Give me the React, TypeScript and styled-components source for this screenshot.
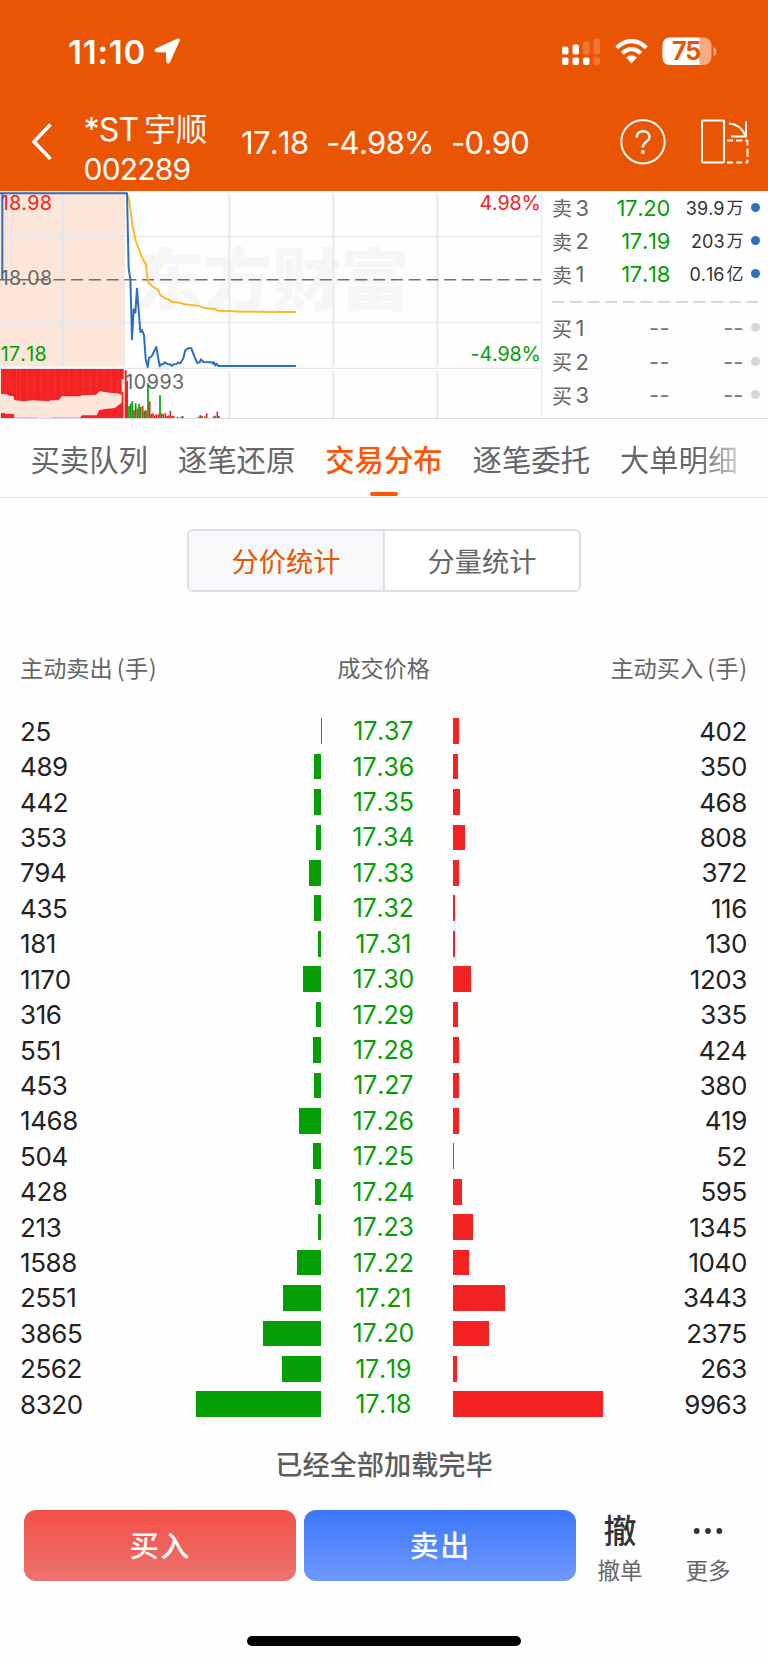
import React from 'react';
import styled, { createGlobalStyle } from 'styled-components';

const GREEN = '#059f05';
const RED = '#f42222';
const BLUE = '#2d70c2';

const GlobalStyle = createGlobalStyle`
  * { box-sizing: border-box; }
  body {
    margin: 0;
    background: #fff;
    font-family: Inter, 'Noto Sans CJK SC', sans-serif;
    font-kerning: none;
    color: #222;
  }
`;

const Screen = styled.main`
  width: 768px;
  height: 1663px;
  display: flex;
  flex-direction: column;
  background: #fefefe;
  overflow: hidden;
  white-space: nowrap;
`;

const Header = styled.header`
  height: 190.5px;
  flex: none;
  background: #ea5504;
  color: #fff;
`;

const StatusBar = styled.div`
  height: 102px;
  display: flex;
  align-items: center;
  padding: 1px 51.5px 0 68px;
`;

const Clock = styled.span`
  width: 86px;
  font-size: 33px;
  font-weight: 600;
  letter-spacing: 0.8px;
`;

const StatusIcons = styled.div`
  margin-left: auto;
  display: flex;
  align-items: center;
`;

const TitleBar = styled.div`
  display: flex;
  height: 88px;
  padding-left: 31px;
`;

const BackIcon = styled.svg`
  margin-top: 21px;
  flex: none;
`;

const StockName = styled.div`
  width: 157px;
  padding: 8px 0 0 30.5px;
  display: flex;
  flex-direction: column;
`;

const Name = styled.span`
  font-size: 32px;
  line-height: 40px;
  letter-spacing: -0.8px;
`;

const Cjk = styled.span`
  font-size: 31.5px;
  letter-spacing: -0.2px;
  margin-left: 6px;
`;

const Code = styled.span`
  font-size: 30px;
  line-height: 39px;
  letter-spacing: -0.8px;
`;

const Quote = styled.div`
  display: flex;
  width: 400px;
  height: 80px;
  padding-left: 31px;
  align-items: center;
  font-size: 31px;
  letter-spacing: -0.7px;
`;

const QuoteValue = styled.span<{ $width: number }>`
  width: ${(p) => p.$width}px;
`;

const TitleIcons = styled.div`
  display: flex;
  height: 80px;
  align-items: center;
  gap: 35px;
  margin-left: 10px;
`;

const Market = styled.section`
  height: 228.5px;
  flex: none;
  display: flex;
  border-bottom: 1.5px solid #d9dbe2;
`;

const Chart = styled.svg`
  width: 541px;
  height: 227px;
  flex: none;
`;

const OrderBook = styled.div`
  flex: 1;
  border-left: 1px solid #e6e8ee;
  padding: 0.5px 8px 0 10px;
`;

const OrderRow = styled.div`
  height: 33.4px;
  display: flex;
  align-items: center;
  color: #666;
`;

const OrderLabel = styled.span`
  width: 48px;
  font-size: 20px;
  display: flex;
  align-items: center;
  gap: 3.5px;
`;

const Level = styled.span`
  font-size: 22px;
`;

const OrderPrice = styled.span<{ $empty: boolean }>`
  width: 70px;
  text-align: right;
  font-size: 22px;
  letter-spacing: ${(p) => (p.$empty ? 0.4 : -0.3)}px;
  color: ${(p) => (p.$empty ? '#777' : GREEN)};
`;

const OrderVolume = styled.span<{ $empty: boolean }>`
  width: 73.5px;
  display: flex;
  align-items: center;
  justify-content: flex-end;
  gap: 2px;
  padding-top: ${(p) => (p.$empty ? 0 : 1)}px;
  font-size: ${(p) => (p.$empty ? 22 : 18)}px;
  color: ${(p) => (p.$empty ? '#777' : '#333')};
`;

const VolumeUnit = styled.span`
  font-size: 17px;
  line-height: 22px;
  padding-bottom: 1px;
`;

const Dot = styled.i<{ $empty: boolean }>`
  width: 9px;
  height: 9px;
  border-radius: 50%;
  margin: 0 0 1px 7.5px;
  background: ${(p) => (p.$empty ? '#d4d7dd' : BLUE)};
`;

const OrderDivider = styled.svg`
  display: block;
  margin: 10px 0 8.5px;
`;

const Tabs = styled.nav`
  height: 78.5px;
  flex: none;
  display: flex;
  gap: 30px;
  padding-left: 30.5px;
  border-bottom: 1.5px solid #dcdfe5;
`;

const Tab = styled.div<{ $active?: boolean; $faded?: boolean }>`
  width: 117.4px;
  flex: none;
  display: flex;
  flex-direction: column;
  align-items: center;
  font-size: 29.4px;
  line-height: 44px;
  padding-top: 19.5px;
  font-weight: ${(p) => (p.$active ? 500 : 400)};
  color: ${(p) => (p.$active ? '#ff5500' : '#666')};
  ${(p) => p.$faded && 'mask-image: linear-gradient(90deg, #000 65%, rgba(0,0,0,.35) 100%);'}
`;

const Indicator = styled.i`
  width: 28px;
  height: 4px;
  margin-top: 9px;
  border-radius: 2px;
  background: #ff5500;
`;

const Segmented = styled.div`
  width: 394px;
  height: 63px;
  flex: none;
  margin: 31.5px auto 0 187px;
  display: flex;
  border: 2px solid #dcdfe5;
  border-radius: 6px;
  overflow: hidden;
`;

const Segment = styled.div<{ $active?: boolean }>`
  flex: 1;
  display: flex;
  align-items: center;
  justify-content: center;
  padding-bottom: 2px;
  font-size: 27.2px;
  color: ${(p) => (p.$active ? '#ea5504' : '#666')};
  background: ${(p) => (p.$active ? '#f7f8fa' : '#fff')};
  & + & { border-left: 2px solid #dcdfe5; }
`;

const Columns = styled.div`
  display: grid;
  grid-template-columns: 1fr 93px 1fr;
  height: 34px;
  flex: none;
  margin-top: 58px;
  padding: 0 20.5px 0 20px;
  align-items: center;
  font-size: 23.2px;
  color: #666;
  & > :last-child { text-align: right; }
`;

const Unit = styled.span`
  margin-left: 4px;
  letter-spacing: 0.5px;
  font-family: 'Noto Sans CJK SC', sans-serif;
`;

const Table = styled.div`
  margin-top: 29.5px;
  flex: none;
`;

const TableRow = styled.div`
  height: 35.43px;
  display: grid;
  grid-template-columns: 161px 140px 132px 160px 134px;
  padding-left: 20px;
  align-items: center;
  font-size: 26px;
  letter-spacing: -0.4px;
`;

const Price = styled.span`
  text-align: center;
  padding-right: 7.5px;
  font-size: 25px;
  letter-spacing: -0.2px;
  color: ${GREEN};
`;

const Bar = styled.i<{ $side: 'sell' | 'buy' }>`
  height: 25.7px;
  justify-self: ${(p) => (p.$side === 'sell' ? 'end' : 'start')};
  background: ${(p) => (p.$side === 'sell' ? '#049f04' : RED)};
`;

const Amount = styled.span<{ $right?: boolean }>`
  text-align: ${(p) => (p.$right ? 'right' : 'left')};
`;

const Loaded = styled.p`
  margin: 19.500px 0 0;
  height: 50px;
  flex: none;
  line-height: 50px;
  text-align: center;
  font-size: 27.2px;
  font-weight: 500;
  color: #5c5c5c;
`;

const Actions = styled.footer`
  display: flex;
  flex: none;
  margin-top: 19px;
  padding-left: 24px;
`;

const TradeButtons = styled.div`
  display: flex;
  gap: 8px;
`;

const TradeButton = styled.button<{ $from: string; $to: string }>`
  width: 272px;
  height: 71px;
  border: 0;
  border-radius: 12px;
  padding: 0 0 3px 0.5px;
  background: linear-gradient(${(p) => p.$from}, ${(p) => p.$to});
  color: #fff;
  font-family: inherit;
  font-size: 29px;
  font-weight: 500;
  letter-spacing: 1.5px;
`;

const Action = styled.div`
  width: 88px;
  display: flex;
  flex-direction: column;
  align-items: center;
  font-size: 22.5px;
  line-height: 30px;
  color: #666;
`;

const ActionGlyph = styled.span`
  height: 41px;
  display: flex;
  align-items: center;
  font-size: 33px;
  font-weight: 500;
  color: #333;
  margin-bottom: 4.5px;
`;

const HomeIndicator = styled.div`
  width: 274px;
  height: 10px;
  flex: none;
  border-radius: 5px;
  margin: 50.5px auto 0 247px;
  background: #000;
`;

const trades: [number, string, number][] = [
  [25, '17.37', 402], [489, '17.36', 350], [442, '17.35', 468], [353, '17.34', 808],
  [794, '17.33', 372], [435, '17.32', 116], [181, '17.31', 130], [1170, '17.30', 1203],
  [316, '17.29', 335], [551, '17.28', 424], [453, '17.27', 380], [1468, '17.26', 419],
  [504, '17.25', 52], [428, '17.24', 595], [213, '17.23', 1345], [1588, '17.22', 1040],
  [2551, '17.21', 3443], [3865, '17.20', 2375], [2562, '17.19', 263], [8320, '17.18', 9963],
];

const sells = [['3', '17.20', '39.9', '万'], ['2', '17.19', '203', '万'], ['1', '17.18', '0.16', '亿']];
const barWidth = (v: number) => (v / 9963) * 150;

/* x, top and colour of each minute's volume bar */
const volumes: [number, number, 'g' | 'r'][] = [
  [386, 662, 'g'], [391, 655, 'g'], [396, 648, 'g'], [401, 675, 'r'], [406, 654, 'g'], [411, 670, 'r'],
  [416, 656, 'g'], [421, 665, 'g'], [427, 662, 'r'], [432, 676, 'g'], [437, 675, 'r'], [443, 594, 'g'],
  [448, 648, 'r'], [453, 686, 'r'], [458, 684, 'r'], [463, 690, 'r'], [468, 687, 'r'], [474, 687, 'r'],
  [479, 630, 'g'], [484, 684, 'r'], [489, 686, 'r'], [495, 684, 'r'], [500, 692, 'r'], [505, 690, 'r'],
  [510, 676, 'r'], [515, 692, 'r'], [520, 692, 'r'], [532, 694, 'g'], [542, 694, 'r'], [547, 692, 'g'],
  [595, 694, 'g'], [600, 689, 'r'], [605, 692, 'g'], [613, 693, 'r'], [619, 684, 'r'], [640, 693, 'g'],
  [645, 691, 'r'], [651, 679, 'r'], [656, 692, 'g'],
];

function PriceChart() {
  return (
    <Chart viewBox="0 17 1623 681">
      <rect x="0" y="18" width="375" height="525" fill="#fce6d9" />
      <rect x="0" y="552" width="371" height="146" fill="#fce6d9" />
      <text x="404" y="359" fontSize="206" fontWeight="900" fill="#f6f6f7" fontFamily="'Noto Sans CJK SC', sans-serif">东方财富</text>
      <g stroke="#e2e6ee" strokeWidth="5">
        <path d="M188 24V543M688 24V543M1000 24V543M1312 24V543M688 556V700M1000 556V700M1312 556V700" />
        <path d="M0 153H1623M0 412H1623M0 549H1623" strokeWidth="4" />
      </g>
      <path d="M0 283H1623" stroke="#707070" strokeWidth="4.5" strokeDasharray="36 17.3" />
      <g fontSize="59" fontFamily="Inter, sans-serif">
        <g letterSpacing="0.8">
          <text x="2" y="74" fill={RED}>18.98</text>
          <text x="2" y="300" fill="#666">18.08</text>
          <text x="2" y="527" fill={GREEN}>17.18</text>
        </g>
        <g letterSpacing="-.5" textAnchor="end">
          <text x="1622" y="74" fill={RED}>4.98%</text>
          <text x="1622" y="527" fill={GREEN}>-4.98%</text>
        </g>
      </g>
      <g fill={RED}>
        <path d="M3 551H371V582H365V628L352 624L330 622L313 620L300 617L288 628L243 630V633H186L175 645H150V648L98 645L70 648L43 644L40 632L28 631L20 627L3 626Z" />
        <path d="M3 683H15V686H42V697H112V699H155V697H240L246 690H290L298 674L318 671L345 668L355 660L365 652V620H370V698H3Z" />
        <path d="M374 555h6v32h4v111h-10z" />
      </g>
      <path d="M8 552V624M18 552V624M29 552V628M50 552V640M60 552V642M81 552V642M102 552V640M123 552V640M144 552V642M165 552V640M186 552V630M207 552V628M228 552V628M249 552V626M270 552V624M291 552V618M312 552V616M333 552V618M354 552V620M354 668V698M333 676V698M312 678V698" stroke="#f64844" strokeWidth="1.5" />
      <g strokeWidth="5">
        {volumes.map(([x, top, c]) => (
          <path key={x} d={`M${x + 1} 698V${top}`} stroke={c === 'g' ? GREEN : RED} />
        ))}
      </g>
      <text x="376" y="611" fontSize="59" letterSpacing="1.5" fill="#666" fontFamily="Inter, sans-serif">10993</text>
      <g fill="none" strokeWidth="6" strokeLinejoin="round">
        <path stroke="#fdb72c" d="M380 24L387 40L397 120L404 150L406 164L426 215L438 238L442 278L447 294L457 303L474 313L480 328L498 341L505 342L515 349L543 353L553 357L593 361L618 369L643 371L653 376L690 377L720 379L888 380" />
        <path stroke={BLUE} d="M7 283V24H0H381L386 250L391 280L396 462L401 372L406 382L411 310L421 440L426 434L432 450L437 520L443 545L447 518L455 513L463 497L469 485L479 543L483 537L490 537L494 531L505 537L511 537L515 542L520 537L530 536L534 531L541 534L550 519L556 495L566 488L574 489L583 513L592 533L599 531L603 522L610 530L635 531L638 535L641 530L646 541L650 535L655 542H888" />
      </g>
    </Chart>
  );
}

export default function App() {
  return (
    <Screen>
      <GlobalStyle />
      <Header>
        <StatusBar>
          <Clock>11:10</Clock>
          <svg width="27" height="27" viewBox="0 0 27 27">
            <path d="M23.6.6Q26.5-.3 25.8 2.6L16 24.3Q14.2 27 12.3 24.3L12 14.6L2.300 14.3Q-.9 12.700 1.700 10.500Z" fill="#fff" />
          </svg>
          <StatusIcons>
            <svg width="155" height="30" viewBox="0 0 155 30" fill="#fff">
              <rect x="0" y="9.500" width="6.500" height="8" rx="2" />
              <rect x="10.500" y="7.500" width="6.500" height="10" rx="2" />
              <rect x="21" y="4.500" width="6.500" height="13" rx="2" opacity=".2" />
              <rect x="31.500" y="1.500" width="6.500" height="16" rx="2" opacity=".2" />
              <rect x="0" y="20.500" width="6.500" height="7.500" rx="2" />
              <rect x="10.500" y="20.500" width="6.500" height="7.500" rx="2" />
              <rect x="21" y="20.500" width="6.500" height="7.500" rx="2" />
              <rect x="31.500" y="20.500" width="6.500" height="7.500" rx="2" opacity=".2" />
              <path d="M53.300 9.500C62 -.5 77 -.5 85.700 9.500L82.800 12.300C75.500 4.200 63.500 4.200 56.200 12.300Z" />
              <path d="M58.800 15C65 8.400 74 8.400 80.200 15L77.200 17.800C72.300 13 66.700 13 61.800 17.800Z" />
              <path d="M64.200 20.600C67.500 17.600 71.500 17.600 74.800 20.600L69.500 26.400Z" />
              <rect x="100.500" y="0.500" width="49" height="27.500" rx="8" opacity=".5" />
              <path d="M108.500 .5H137.500V28H108.500Q100.500 28 100.500 20V8.500Q100.500 .5 108.500 .5Z" />
              <path d="M151.500 10Q154.500 11.500 154.500 14.500T151.500 19Z" opacity=".5" />
              <text x="110" y="23.300" fontSize="25" fontWeight="700" fontFamily="Inter, sans-serif" letterSpacing="-1.300" fill="#ea5504">75</text>
            </svg>
          </StatusIcons>
        </StatusBar>
        <TitleBar>
          <BackIcon width="22" height="38" viewBox="0 0 22 38" fill="none">
            <path d="M19.500 1.500L3 18.700L19.500 36" stroke="#fff" strokeWidth="3.600" />
          </BackIcon>
          <StockName>
            <Name>*ST<Cjk>宇顺</Cjk></Name>
            <Code>002289</Code>
          </StockName>
          <Quote>
            <QuoteValue $width={85}>17.18</QuoteValue>
            <QuoteValue $width={125}>-4.98%</QuoteValue>
            <span>-0.90</span>
          </Quote>
          <TitleIcons>
            <svg width="46" height="46" viewBox="0 0 46 46" fill="none" stroke="#fff">
              <circle cx="23" cy="22.700" r="21.700" strokeWidth="2" />
              <path d="M16.600 18.500C16.600 14.500 19.300 12.200 23 12.200S29.500 14.300 29.500 18C29.500 22.800 22.800 22.500 22.800 28.500" strokeWidth="2.400" />
              <circle cx="22.800" cy="33" r="2" fill="#fff" stroke="none" />
            </svg>
            <svg width="49" height="46" viewBox="0 0 49 46" fill="none" stroke="#fff" strokeWidth="2">
              <rect x="1" y="1.500" width="22" height="42" rx="1" />
              <path d="M28 4.500C35 5 41 9 44 16M45 2.500V17.500H30" />
              <path d="M26 21.500H46.500" strokeDasharray="6 3.200" />
              <path d="M46.500 21.500V43.500" strokeDasharray="5 3.200 8 3" />
              <path d="M26 43.500H47" strokeDasharray="6 3.200" />
            </svg>
          </TitleIcons>
        </TitleBar>
      </Header>

      <Market>
        <PriceChart />
        <OrderBook>
          {sells.map(([level, price, volume, unit]) => (
            <OrderRow key={level}>
              <OrderLabel>卖<Level>{level}</Level></OrderLabel>
              <OrderPrice $empty={false}>{price}</OrderPrice>
              <OrderVolume $empty={false}><span>{volume}</span><VolumeUnit>{unit}</VolumeUnit></OrderVolume>
              <Dot $empty={false} />
            </OrderRow>
          ))}
          <OrderDivider width="206" height="2" viewBox="0 0 206 2">
            <path d="M0 1H206" stroke="#d5d7e0" strokeWidth="2" strokeDasharray="12 5.700" />
          </OrderDivider>
          {['1', '2', '3'].map((level) => (
            <OrderRow key={level}>
              <OrderLabel>买<Level>{level}</Level></OrderLabel>
              <OrderPrice $empty>--</OrderPrice>
              <OrderVolume $empty>--</OrderVolume>
              <Dot $empty />
            </OrderRow>
          ))}
        </OrderBook>
      </Market>

      <Tabs>
        <Tab>买卖队列</Tab>
        <Tab>逐笔还原</Tab>
        <Tab $active>交易分布<Indicator /></Tab>
        <Tab>逐笔委托</Tab>
        <Tab $faded>大单明细</Tab>
      </Tabs>

      <Segmented>
        <Segment $active>分价统计</Segment>
        <Segment>分量统计</Segment>
      </Segmented>

      <Columns>
        <span>主动卖出<Unit>(手)</Unit></span>
        <span>成交价格</span>
        <span>主动买入<Unit>(手)</Unit></span>
      </Columns>

      <Table>
        {trades.map(([sell, price, buy]) => (
          <TableRow key={price}>
            <Amount>{sell}</Amount>
            <Bar $side="sell" style={{ width: barWidth(sell) }} />
            <Price>{price}</Price>
            <Bar $side="buy" style={{ width: barWidth(buy) }} />
            <Amount $right>{buy}</Amount>
          </TableRow>
        ))}
      </Table>

      <Loaded>已经全部加载完毕</Loaded>

      <Actions>
        <TradeButtons>
          <TradeButton $from="#f44f48" $to="#ec746f">买入</TradeButton>
          <TradeButton $from="#3b76f9" $to="#6e99ff">卖出</TradeButton>
        </TradeButtons>
        <Action>
          <ActionGlyph>撤</ActionGlyph>
          撤单
        </Action>
        <Action>
          <ActionGlyph>
            <svg width="30" height="8" viewBox="0 0 30 8" fill="#333">
              <circle cx="3.700" cy="4" r="2.900" />
              <circle cx="15" cy="4" r="2.900" />
              <circle cx="26.300" cy="4" r="2.900" />
            </svg>
          </ActionGlyph>
          更多
        </Action>
      </Actions>
      <HomeIndicator />
    </Screen>
  );
}
